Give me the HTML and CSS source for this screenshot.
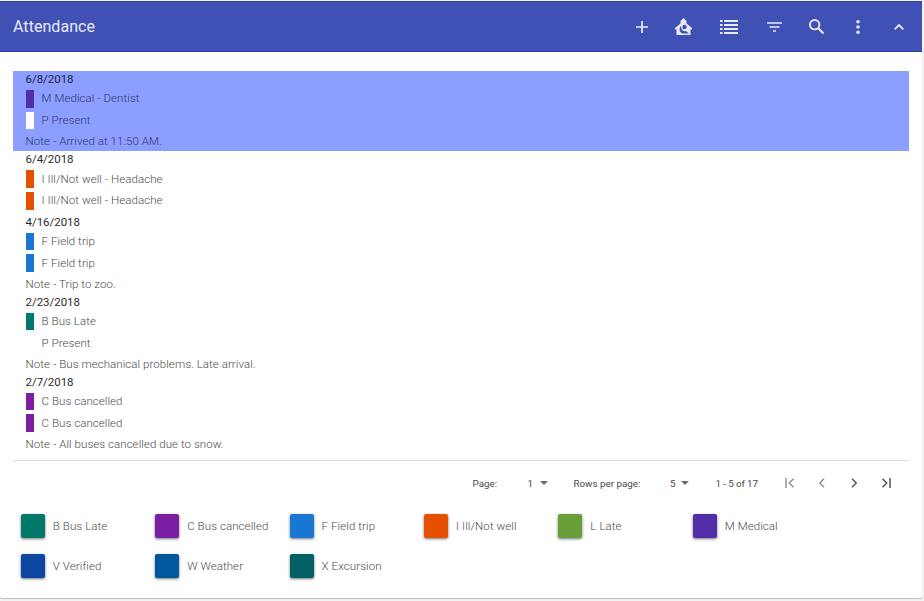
FILE: index.html
```html
<!DOCTYPE html>
<html lang="en">
<head>
<meta charset="utf-8">
<title>Attendance</title>
<link rel="stylesheet" href="styles.css">
</head>
<body>
<main class="card">
  <header class="toolbar">
    <h1>Attendance</h1>
    <nav class="actions">
      <svg class="i-add" viewBox="0 0 12 12"><path d="M6 0v12M0 6h12" stroke-width="1.7"/></svg>
      <svg class="i-school" viewBox="0 0 17 17"><path class="solid" fill-rule="evenodd" d="M8.500 0l3 3v2.500L17 10v1.500h-1.500V17h-14v-5.500H0V10l5.500-4.500V3zM6 8c-2.500 2.500-1.500 6.500 1.500 7.500h6.500l-3-2.500c-3 1-5-1.500-5-5zM9.500 6.800a2.200 2.200 0 1 1 0 4.400 2.200 2.200 0 0 1 0-4.400z"/></svg>
      <svg class="i-list" viewBox="0 0 18 14"><path d="M0 1h2.500M0 5h2.500M0 9h2.500M0 13h2.500M4 1h14M4 5h14M4 9h14M4 13h14" stroke-width="2"/></svg>
      <svg class="i-filter" viewBox="0 0 15 10"><path d="M0 1h15M2.500 5h10M6 9h3" stroke-width="1.600"/></svg>
      <svg class="i-search" viewBox="0 0 14 14"><circle cx="5.300" cy="5.300" r="4.400" stroke-width="1.800"/><path d="M8.500 8.500l5 5" stroke-width="2"/></svg>
      <svg class="i-more" viewBox="0 0 4 14"><path class="solid" d="M2 0a1.800 1.800 0 1 1 0 3.600A1.800 1.800 0 0 1 2 0zM2 5.200a1.800 1.800 0 1 1 0 3.600 1.800 1.800 0 0 1 0-3.600zM2 10.400A1.800 1.800 0 1 1 2 14a1.800 1.800 0 0 1 0-3.600z"/></svg>
      <svg class="i-up" viewBox="0 0 10 6"><path d="M.7 5.300L5 1l4.300 4.300" stroke-width="1.800"/></svg>
    </nav>
  </header>

  <section class="records">
    <article class="record selected">
      <h2>6/8/2018</h2>
      <p class="entry"><i class="medical"></i>M Medical - Dentist</p>
      <p class="entry"><i class="present"></i>P Present</p>
      <p class="note">Note - Arrived at 11:50 AM.</p>
    </article>
    <article class="record">
      <h2>6/4/2018</h2>
      <p class="entry"><i class="ill"></i>I Ill/Not well - Headache</p>
      <p class="entry"><i class="ill"></i>I Ill/Not well - Headache</p>
    </article>
    <article class="record">
      <h2>4/16/2018</h2>
      <p class="entry"><i class="field"></i>F Field trip</p>
      <p class="entry"><i class="field"></i>F Field trip</p>
      <p class="note">Note - Trip to zoo.</p>
    </article>
    <article class="record">
      <h2>2/23/2018</h2>
      <p class="entry"><i class="bus-late"></i>B Bus Late</p>
      <p class="entry"><i class="present"></i>P Present</p>
      <p class="note">Note - Bus mechanical problems. Late arrival.</p>
    </article>
    <article class="record">
      <h2>2/7/2018</h2>
      <p class="entry"><i class="cancelled"></i>C Bus cancelled</p>
      <p class="entry"><i class="cancelled"></i>C Bus cancelled</p>
      <p class="note">Note - All buses cancelled due to snow.</p>
    </article>
  </section>

  <div class="pager">
    <span class="page-label">Page:</span>
    <span class="page-value">1</span><b class="caret"></b>
    <span class="rows-label">Rows per page:</span>
    <span class="rows-value">5</span><b class="caret"></b>
    <span class="range">1 - 5 of 17</span>
    <div class="arrows">
      <svg class="off" viewBox="0 0 10 10"><path d="M1 0v10M8.500 .8L4.300 5l4.200 4.200"/></svg>
      <svg class="off" viewBox="0 0 10 10"><path d="M7 .8L2.800 5 7 9.200"/></svg>
      <svg viewBox="0 0 10 10"><path d="M3 .8L7.200 5 3 9.200"/></svg>
      <svg viewBox="0 0 10 10"><path d="M9 0v10M1.500 .8L5.700 5 1.500 9.200"/></svg>
    </div>
  </div>

  <ul class="legend">
    <li><i class="bus-late"></i>B Bus Late</li>
    <li><i class="cancelled"></i>C Bus cancelled</li>
    <li><i class="field"></i>F Field trip</li>
    <li><i class="ill"></i>I Ill/Not well</li>
    <li><i class="late"></i>L Late</li>
    <li><i class="medical"></i>M Medical</li>
    <li><i class="verified"></i>V Verified</li>
    <li><i class="weather"></i>W Weather</li>
    <li><i class="excursion"></i>X Excursion</li>
  </ul>
</main>
</body>
</html>
```
FILE: styles.css
```css
* { box-sizing: border-box; margin: 0; padding: 0; }
body {
  height: 601px;
  padding-top: 1px;
  overflow: hidden;
  background: #f3f3f4;
  font-family: Roboto, sans-serif;
}
.card {
  width: 922px;
  height: 597px;
  background: #fff;
  border-radius: 0 0 2px 2px;
  box-shadow: 0 1px 1px #bbb;
}
.toolbar {
  display: flex;
  align-items: center;
  justify-content: space-between;
  height: 51px;
  padding: 0 18px 0 13px;
  background: #3f51b5;
  border-top: 1px solid #3346a8;
  border-bottom: 1px solid #2b3da0;
}
.toolbar h1 { color: #e8eaf6; font-size: 16px; font-weight: 400; letter-spacing: .05px; }
.actions { display: flex; align-items: center; }
svg { display: block; fill: none; stroke: currentColor; }
.actions svg { color: #e8eaf6; }
.solid { fill: currentColor; stroke: none; }
.i-add { width: 12px; height: 12px; margin-right: 27px; }
.i-school { width: 17px; height: 17px; margin-right: 28px; }
.i-list { width: 18px; height: 14px; margin-right: 29px; }
.i-filter { width: 15px; height: 10px; margin-right: 26.500px; }
.i-search { width: 15px; height: 15px; margin-right: 32.500px; }
.i-more { width: 4px; height: 14px; margin-right: 34px; }
.i-up { width: 10px; height: 6px; }

.records { margin: 19px 13px 0; padding-bottom: 6.400px; border-bottom: 1px solid #dcdcdc; }
.record { padding-left: 12.600px; font-size: 11.500px; font-weight: 300; color: #4c4c4c; letter-spacing: .06px; }
.record h2 { height: 19.200px; color: #2b2b2b; font-size: 11.500px; font-weight: 400; line-height: 17px; letter-spacing: -.05px; }
.entry { display: flex; align-items: center; height: 17.600px; margin-bottom: 4px; line-height: 17px; }
.entry i { width: 8px; height: 17.600px; margin-right: 8px; }
.note { height: 17.600px; line-height: 17.600px; }
.selected { height: 80.200px; background: #8c9eff; color: #2f3770; }
.selected h2 { color: #1f2340; }

.pager { display: flex; align-items: center; height: 45px; padding-left: 472.500px; color: #484848; font-size: 9.800px; }
.page-label { width: 55px; }
.page-value { width: 12px; }
.caret { border: 4px solid transparent; border-top-color: #6b6b6b; border-bottom: 0; }
.rows-label { width: 96.500px; margin-left: 26px; }
.rows-value { width: 11px; }
.range { width: 69px; margin-left: 26.500px; letter-spacing: -.1px; }
.arrows { display: flex; gap: 22px; color: #555; }
.arrows svg { width: 10px; height: 10px; stroke-width: 1.500; }
.arrows .off { color: #929292; }

.legend {
  display: grid;
  grid-template-columns: repeat(6, 134.400px);
  grid-auto-rows: 40px;
  padding-left: 20.800px;
  list-style: none;
  color: #4c4c4c;
  font-size: 11.500px;
  font-weight: 300;
  letter-spacing: .08px;
}
.legend li { display: flex; align-items: center; }
.legend i { width: 24px; height: 24px; margin-right: 8px; border-radius: 2px; box-shadow: 0 1px 3px rgba(0, 0, 0, .55); }

.bus-late { background: #00796b; }
.cancelled { background: #7b1fa2; }
.field { background: #1976d2; }
.ill { background: #e65100; }
.late { background: #689f38; }
.medical { background: #512da8; }
.verified { background: #0d47a1; }
.weather { background: #01579b; }
.excursion { background: #006064; }
.present { background: #fff; }
```
